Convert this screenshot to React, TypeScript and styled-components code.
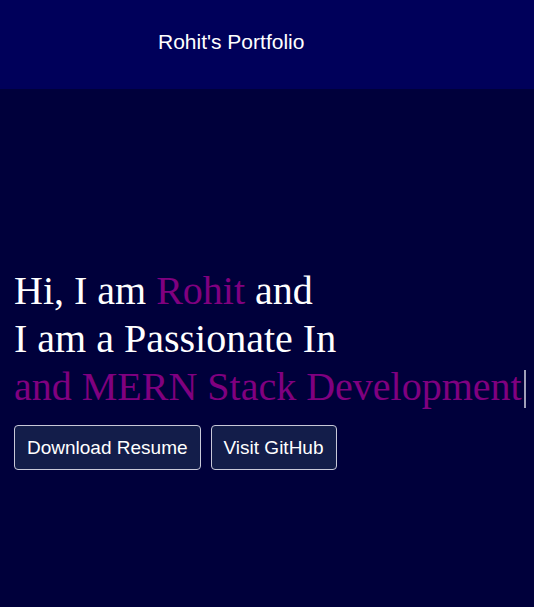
import React from "react";
import styled, { createGlobalStyle } from "styled-components";

const Global = createGlobalStyle`
  html, body { margin: 0; padding: 0; background: #00003b; }
  body { font-family: "Liberation Sans", Arial, sans-serif; }
`;

const Page = styled.div`
  min-height: 607px;
  background: #00003b;
  display: flex;
  flex-direction: column;
`;

const Header = styled.header`
  height: 89px;
  background: #00005a;
  display: flex;
  align-items: center;
  padding: 0 0 6px 158px;
  box-sizing: border-box;
`;

const Brand = styled.h1`
  margin: 0;
  font-family: "Liberation Sans", Arial, sans-serif;
  font-weight: 400;
  font-size: 21px;
  color: #ffffff;
`;

const Hero = styled.main`
  padding: 178px 14px 0;
  display: flex;
  flex-direction: column;
  gap: 14px;
`;

const Heading = styled.h2`
  margin: 0;
  font-family: "Liberation Serif", "Times New Roman", serif;
  font-weight: 400;
  font-size: 40px;
  line-height: 48px;
  color: #ffffff;
  white-space: nowrap;
`;

const Accent = styled.span`
  color: #800080;
`;

const Cursor = styled.span`
  display: inline-block;
  width: 2px;
  height: 38px;
  margin-left: 2px;
  vertical-align: -8px;
  background: #a0a0b8;
`;

const Actions = styled.div`
  display: flex;
  gap: 10px;
`;

const Button = styled.button`
  height: 45px;
  padding: 0 12px;
  background: #131d4a;
  color: #ffffff;
  border: 1px solid #c8c8d8;
  border-radius: 4px;
  font-family: "Liberation Sans", Arial, sans-serif;
  font-size: 19px;
  cursor: pointer;
`;

export default function App() {
  return (
    <>
      <Global />
      <Page>
        <Header>
          <Brand>Rohit's Portfolio</Brand>
        </Header>
        <Hero>
          <Heading>
            Hi, I am <Accent>Rohit</Accent> and
            <br />
            I am a Passionate In
            <br />
            <Accent>and MERN Stack Development</Accent>
            <Cursor />
          </Heading>
          <Actions>
            <Button>Download Resume</Button>
            <Button>Visit GitHub</Button>
          </Actions>
        </Hero>
      </Page>
    </>
  );
}
